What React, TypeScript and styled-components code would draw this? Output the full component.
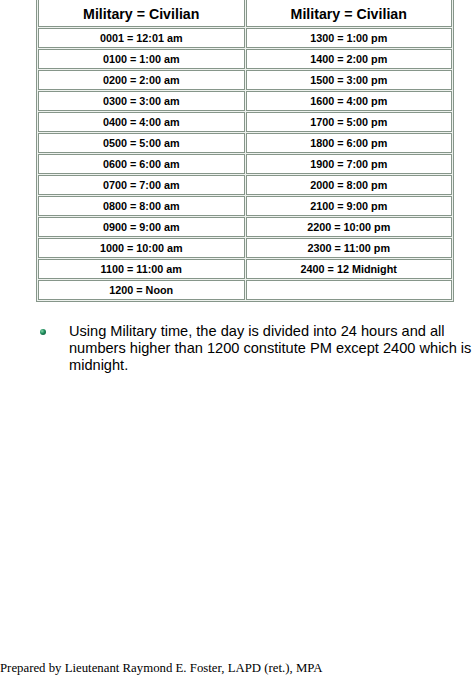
import React from 'react';
import styled, { createGlobalStyle } from 'styled-components';

const GlobalStyle = createGlobalStyle`
  html, body {
    margin: 0;
    padding: 0;
    background: #ffffff;
  }
`;

const Page = styled.div`
  display: flex;
  flex-direction: column;
  min-height: 681px;
  width: 474px;
  overflow: hidden;
  font-family: 'Liberation Sans', Arial, sans-serif;
  color: #000;
`;

const TimeTable = styled.table`
  margin: -6px 0 0 36px;
  width: 418px;
  border: 1px solid #86968a;
  border-collapse: separate;
  border-spacing: 1px;
  background: #eef2ee;
  table-layout: fixed;
`;

const HeadCell = styled.th`
  height: 25px;
  padding: 0;
  border: 1px solid #86968a;
  background: #fff;
  font-size: 14.2px;
  font-weight: bold;
  text-align: center;
  vertical-align: middle;
  padding-top: 4px;
`;

const Cell = styled.td`
  height: 18px;
  padding: 0;
  border: 1px solid #86968a;
  background: #fff;
  font-size: 10.8px;
  font-weight: bold;
  text-align: center;
  vertical-align: middle;
`;

const Note = styled.ul`
  list-style: none;
  margin: 21px 0 0 0;
  padding: 0 0 0 40px;
`;

const NoteItem = styled.li`
  display: flex;
  gap: 23px;
  font-size: 14.6px;
  line-height: 17px;
`;

const Bullet = styled.span`
  flex: none;
  width: 6px;
  height: 6px;
  margin-top: 6px;
  border-radius: 50%;
  background: radial-gradient(circle at 35% 35%, #7fd6a8 0%, #1d8a5a 45%, #0b4a30 100%);
`;

const Footer = styled.footer`
  margin-top: auto;
  padding: 0 0 5px 0;
  font-family: 'Liberation Serif', 'Times New Roman', serif;
  font-size: 12.8px;
  white-space: nowrap;
`;

const rows: [string, string][] = [
  ['0001 = 12:01 am', '1300 = 1:00 pm'],
  ['0100 = 1:00 am', '1400 = 2:00 pm'],
  ['0200 = 2:00 am', '1500 = 3:00 pm'],
  ['0300 = 3:00 am', '1600 = 4:00 pm'],
  ['0400 = 4:00 am', '1700 = 5:00 pm'],
  ['0500 = 5:00 am', '1800 = 6:00 pm'],
  ['0600 = 6:00 am', '1900 = 7:00 pm'],
  ['0700 = 7:00 am', '2000 = 8:00 pm'],
  ['0800 = 8:00 am', '2100 = 9:00 pm'],
  ['0900 = 9:00 am', '2200 = 10:00 pm'],
  ['1000 = 10:00 am', '2300 = 11:00 pm'],
  ['1100 = 11:00 am', '2400 = 12 Midnight'],
  ['1200 = Noon', ''],
];

export default function App() {
  return (
    <Page>
      <GlobalStyle />
      <TimeTable>
        <thead>
          <tr>
            <HeadCell>Military = Civilian</HeadCell>
            <HeadCell>Military = Civilian</HeadCell>
          </tr>
        </thead>
        <tbody>
          {rows.map(([left, right]) => (
            <tr key={left}>
              <Cell>{left}</Cell>
              <Cell>{right}</Cell>
            </tr>
          ))}
        </tbody>
      </TimeTable>
      <Note>
        <NoteItem>
          <Bullet />
          <span>
            Using Military time, the day is divided into 24 hours and all
            numbers higher than 1200 constitute PM except 2400 which is
            midnight.
          </span>
        </NoteItem>
      </Note>
      <Footer>Prepared by Lieutenant Raymond E. Foster, LAPD (ret.), MPA</Footer>
    </Page>
  );
}
